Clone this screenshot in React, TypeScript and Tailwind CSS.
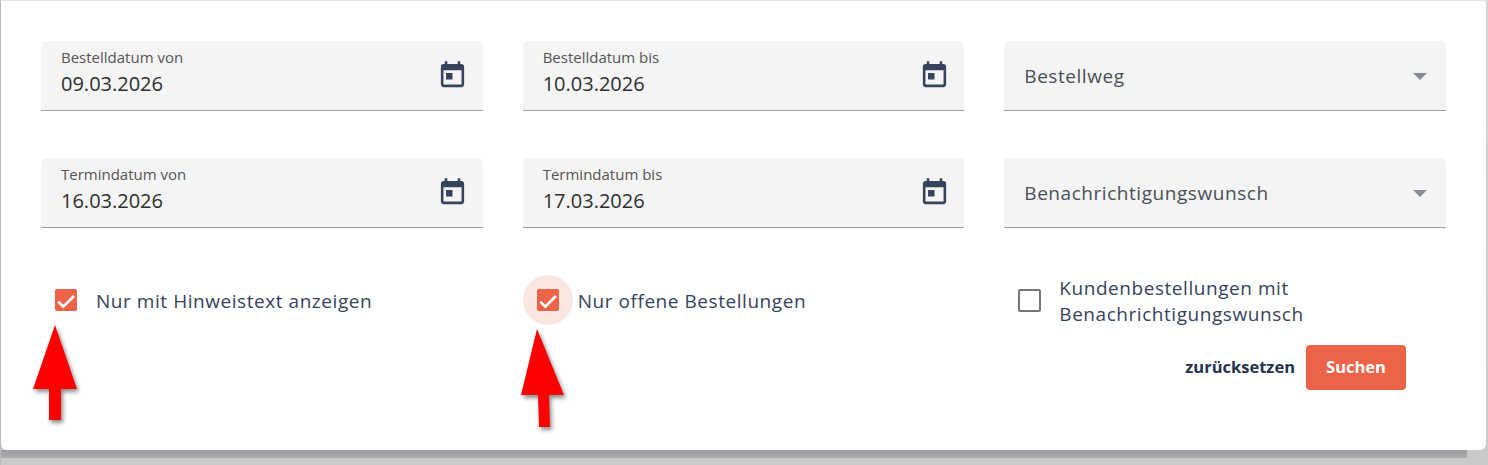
const font = "font-['Open_Sans',sans-serif]";

function CalendarIcon() {
  return (
    <svg viewBox="0 0 24 24" className="h-[31px] w-[31px] shrink-0 fill-[#36435c]">
      <path d="M19 3h-1V1h-2v2H8V1H6v2H5c-1.11 0-1.99.9-1.99 2L3 19c0 1.1.89 2 2 2h14c1.1 0 2-.9 2-2V5c0-1.1-.9-2-2-2zm0 16H5V8h14v11zM7 10h5v5H7z" />
    </svg>
  );
}

function DateField({ label, value }: { label: string; value: string }) {
  return (
    <div className="flex h-[70px] items-center justify-between rounded-t-[5px] border-b border-[#9ba1a9] bg-[#f4f4f4] pl-5 pr-[14.5px]">
      <div className="-mt-[7px]">
        <div className="text-[15px] leading-[20px] text-[#555555]">{label}</div>
        <div className="mt-[4px] text-[20px] leading-[26px] text-[#2e2e2e]">{value}</div>
      </div>
      <CalendarIcon />
    </div>
  );
}

function SelectField({ label }: { label: string }) {
  return (
    <div className="flex h-[70px] items-center justify-between rounded-t-[5px] border-b border-[#9ba1a9] bg-[#f4f4f4] pl-5 pr-[19px]">
      <span className="pt-[2px] text-[19px] tracking-[0.55px] text-[#4a4f57]">{label}</span>
      <span className="mt-[1px] h-0 w-0 border-x-[7px] border-t-[7px] border-x-transparent border-t-[#858b98]" />
    </div>
  );
}

function CheckBox({ checked, focused }: { checked?: boolean; focused?: boolean }) {
  return (
    <span
      className={
        focused
          ? "flex h-[50px] w-[50px] shrink-0 items-center justify-center rounded-full bg-[#fbe5e0]"
          : "flex h-[50px] w-[50px] shrink-0 items-center justify-center"
      }
    >
      {checked ? (
        <span className="flex h-[22px] w-[22px] items-center justify-center rounded-[2px] bg-[#ed6347]">
          <svg viewBox="0 0 24 24" className="h-[22px] w-[22px]" fill="none" stroke="#ffffff" strokeWidth="2.9">
            <path d="M3.6 13.8L9 19.3 20.7 7.6" />
          </svg>
        </span>
      ) : (
        <span className="h-[23px] w-[23px] rounded-[2px] border-2 border-[#757575]" />
      )}
    </span>
  );
}

function RedArrow({ points, className }: { points: string; className: string }) {
  return (
    <svg viewBox="0 0 60 110" className={className}>
      <polygon points={points} fill="#ff0000" />
    </svg>
  );
}

export default function App() {
  return (
    <div className={`${font} h-[465px] w-[1488px] overflow-hidden border-l border-t border-[#e4e4e4] border-l-[#bababa] bg-[linear-gradient(#d6d6d6,#c9c9c9)]`}>
      <div className="relative h-[449px] w-[1485px] rounded-b-[6px] rounded-tr-[2px] bg-white px-10 pt-10">
        <div className="grid grid-cols-3 gap-x-10 gap-y-[47px]">
          <DateField label="Bestelldatum von" value="09.03.2026" />
          <DateField label="Bestelldatum bis" value="10.03.2026" />
          <SelectField label="Bestellweg" />
          <DateField label="Termindatum von" value="16.03.2026" />
          <DateField label="Termindatum bis" value="17.03.2026" />
          <SelectField label="Benachrichtigungswunsch" />
        </div>

        <div className="mt-[46px] grid grid-cols-3 gap-x-10 text-[19px] leading-[26px] tracking-[0.55px] text-[#36435c]">
          <div className="flex items-center gap-[5px]">
            <CheckBox checked />
            <span className="-mb-[1px] pt-[1px]">Nur mit Hinweistext anzeigen</span>
          </div>
          <div className="flex items-center gap-[5px]">
            <CheckBox checked focused />
            <span className="-mb-[1px] pt-[1px]">Nur offene Bestellungen</span>
          </div>
          <div className="flex items-center gap-[5px]">
            <CheckBox />
            <span className="-mb-[1px] pt-[1px]">
              Kundenbestellungen mit
              <br />
              Benachrichtigungswunsch
            </span>
          </div>
        </div>

        <div className="mt-[19px] flex items-center justify-end gap-[11px] pr-10">
          <button type="button" className="text-[16.5px] font-bold text-[#25324d]">
            zurücksetzen
          </button>
          <button type="button" className="h-[45px] w-[100px] rounded-[4px] bg-[#ed6347] text-[16.5px] font-bold text-white">
            Suchen
          </button>
        </div>

        <RedArrow
          points="22,0 44,64 28,64 28,95 16,95 16,64 0,64"
          className="absolute left-[32px] top-[324px] h-[110px] w-[60px] drop-shadow-[2px_3px_2px_rgba(0,0,0,0.45)]"
        />
        <RedArrow
          points="16,0 43,66 28,66 29,98 18,98 17,66 0,66"
          className="absolute left-[520px] top-[328px] h-[110px] w-[60px] drop-shadow-[2px_3px_2px_rgba(0,0,0,0.45)]"
        />
      </div>
      <div className="h-[8px] w-[1466px] bg-[linear-gradient(#9c9da2,#aaabae)]" />
    </div>
  );
}
